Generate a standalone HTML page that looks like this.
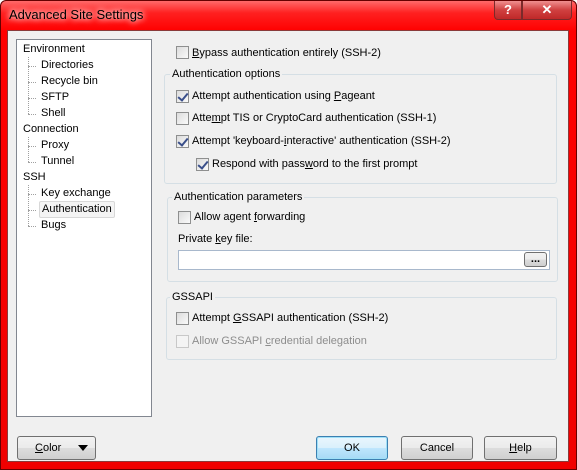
<!DOCTYPE html><html><head><style>
*{margin:0;padding:0;box-sizing:border-box}
body{width:577px;height:470px;overflow:hidden;background:#fff;font-family:"Liberation Sans",sans-serif;font-size:11px;color:#000;line-height:15px}
.win{position:absolute;left:0;top:0;width:577px;height:470px;border-radius:6px 6px 0 0;background:linear-gradient(180deg,#ff6a6a 0,#ff2020 12px,#ff0000 30px,#f00000 470px);border:1px solid #600}
.title{position:absolute;left:9px;top:6px;font-size:13px;color:#000;text-shadow:0 0 6px #fff,0 0 8px #fff;line-height:18px}
.client{position:absolute;left:7px;top:30px;width:562px;height:432px;background:#f0f0f0;border:1px solid #8a3a3a}
.tb{position:absolute;top:1px;height:19px;border:1px solid #7a2a2a;border-top:none;background:linear-gradient(#f09090,#d04040 50%,#c02828);color:#fff;font-weight:bold;text-align:center;font-size:13px;line-height:18px}
.a{position:absolute;white-space:nowrap}
.tree{position:absolute;left:16px;top:39px;width:136px;height:378px;background:#fff;border:1px solid #828790}
.cb{position:absolute;width:13px;height:13px;border:1px solid #8e8f8f;background:linear-gradient(135deg,#dcdcdc,#fafafa)}
.cb.c::after{content:"";position:absolute;left:3px;top:0px;width:4px;height:8px;border:solid #3a4f8a;border-width:0 2px 2px 0;transform:rotate(40deg)}
.cb.d{border-color:#c8c8c8;background:#f4f4f4}
.grp{position:absolute;border:1px solid #d5dfe5;border-radius:3px}
.gl{position:absolute;background:#f0f0f0;padding:0 2px;white-space:nowrap}
.btn{position:absolute;height:24px;border:1px solid #707070;border-radius:3px;background:linear-gradient(#f2f2f2 0,#ebebeb 50%,#dddddd 51%,#cfcfcf);text-align:center;line-height:22px}
u{text-decoration:underline}
.dot{position:absolute;border-left:1px dotted #a0a0a0}
.hd{position:absolute;border-top:1px dotted #a0a0a0;width:8px}
</style></head><body>
<div class="win"></div>
<div class="title">Advanced Site Settings</div>
<div class="tb" style="left:494px;width:28px;border-radius:0 0 0 4px;border-left:1px solid #7a2a2a">?</div>
<div class="tb" style="left:522px;width:50px;border-radius:0 0 4px 0">✕</div>
<div class="client"></div>
<div class="tree">
<div class="dot" style="left:11px;top:17px;height:57px"></div>
<div class="hd" style="left:11px;top:26px"></div><div class="hd" style="left:11px;top:42px"></div><div class="hd" style="left:11px;top:58px"></div><div class="hd" style="left:11px;top:74px"></div>
<div class="dot" style="left:11px;top:97px;height:25px"></div>
<div class="hd" style="left:11px;top:106px"></div><div class="hd" style="left:11px;top:122px"></div>
<div class="dot" style="left:11px;top:145px;height:41px"></div>
<div class="hd" style="left:11px;top:154px"></div><div class="hd" style="left:11px;top:170px"></div><div class="hd" style="left:11px;top:186px"></div>
<div class="a" style="left:6px;top:2px">Environment</div>
<div class="a" style="left:24px;top:18px">Directories</div>
<div class="a" style="left:24px;top:34px">Recycle bin</div>
<div class="a" style="left:24px;top:50px">SFTP</div>
<div class="a" style="left:24px;top:66px">Shell</div>
<div class="a" style="left:6px;top:82px">Connection</div>
<div class="a" style="left:24px;top:98px">Proxy</div>
<div class="a" style="left:24px;top:114px">Tunnel</div>
<div class="a" style="left:6px;top:130px">SSH</div>
<div class="a" style="left:24px;top:146px">Key exchange</div>
<div class="a" style="left:22px;top:161px;padding:0 2px;border:1px solid #d8d8d8;border-radius:2px;background:#f4f4f4">Authentication</div>
<div class="a" style="left:24px;top:178px">Bugs</div>
</div>

<div class="cb" style="left:176px;top:46px"></div><div class="a" style="left:192px;top:46px"><u>B</u>ypass authentication entirely (SSH-2)</div>

<div class="grp" style="left:164px;top:74px;width:393px;height:110px"></div>
<div class="gl" style="left:170px;top:67px">Authentication options</div>
<div class="cb c" style="left:176px;top:90px"></div><div class="a" style="left:192px;top:89px">Attempt authentication using <u>P</u>ageant</div>
<div class="cb" style="left:176px;top:112px"></div><div class="a" style="left:192px;top:111px">Atte<u>m</u>pt TIS or CryptoCard authentication (SSH-1)</div>
<div class="cb c" style="left:176px;top:135px"></div><div class="a" style="left:192px;top:134px">Attempt 'keyboard-<u>i</u>nteractive' authentication (SSH-2)</div>
<div class="cb c" style="left:196px;top:158px"></div><div class="a" style="left:212px;top:157px">Respond with pass<u>w</u>ord to the first prompt</div>

<div class="grp" style="left:167px;top:197px;width:391px;height:85px"></div>
<div class="gl" style="left:172px;top:190px">Authentication parameters</div>
<div class="cb" style="left:178px;top:211px"></div><div class="a" style="left:194px;top:210px">Allow agent <u>f</u>orwarding</div>
<div class="a" style="left:178px;top:232px">Private <u>k</u>ey file:</div>
<div class="a" style="left:178px;top:250px;width:372px;height:20px;background:#fff;border:1px solid #a8b8cc"></div>
<div class="btn" style="left:524px;top:252px;width:23px;height:15px;line-height:12px;font-weight:bold">...</div>

<div class="grp" style="left:166px;top:297px;width:391px;height:63px"></div>
<div class="gl" style="left:170px;top:290px">GSSAPI</div>
<div class="cb" style="left:176px;top:312px"></div><div class="a" style="left:192px;top:311px">Attempt <u>G</u>SSAPI authentication (SSH-2)</div>
<div class="cb d" style="left:176px;top:335px"></div><div class="a" style="left:192px;top:334px;color:#8d8d8d">Allow GSSAPI <u>c</u>redential delegation</div>

<div class="btn" style="left:17px;top:436px;width:79px"><span style="position:absolute;left:17px"><u>C</u>olor</span><span style="position:absolute;right:7px;top:8px;border:5px solid transparent;border-top:6px solid #000;border-bottom:none"></span></div>
<div class="btn" style="left:316px;top:436px;width:72px;border-color:#3c7fb1;box-shadow:inset 0 0 0 1px #9fe0f8;background:linear-gradient(#eaf6fd,#d9f0fc 50%,#bee6fd 51%,#a7d9f5)">OK</div>
<div class="btn" style="left:401px;top:436px;width:72px">Cancel</div>
<div class="btn" style="left:484px;top:436px;width:73px"><u>H</u>elp</div>
</body></html>
